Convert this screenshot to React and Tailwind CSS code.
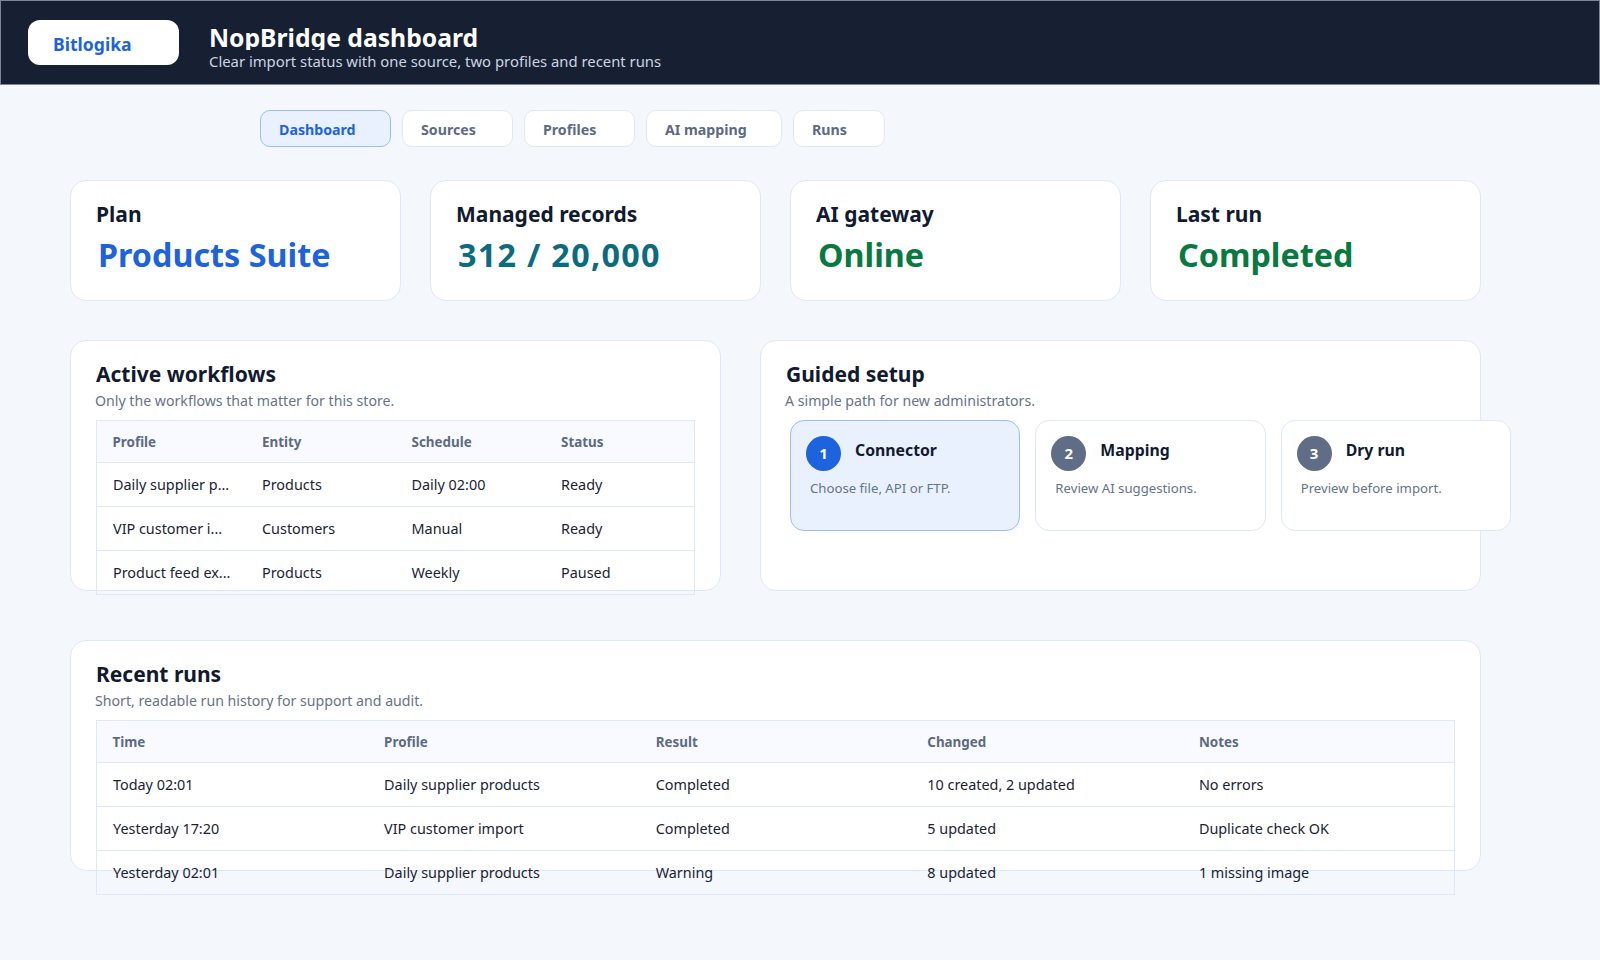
const workflows = [
  ['Daily supplier p...', 'Products', 'Daily 02:00', 'Ready'],
  ['VIP customer i...', 'Customers', 'Manual', 'Ready'],
  ['Product feed ex...', 'Products', 'Weekly', 'Paused'],
];

const runs = [
  ['Today 02:01', 'Daily supplier products', 'Completed', '10 created, 2 updated', 'No errors'],
  ['Yesterday 17:20', 'VIP customer import', 'Completed', '5 updated', 'Duplicate check OK'],
  ['Yesterday 02:01', 'Daily supplier products', 'Warning', '8 updated', '1 missing image'],
];

const stats = [
  { label: 'Plan', value: 'Products Suite', color: 'text-[#1d63dd]' },
  { label: 'Managed records', value: '312 / 20,000', color: 'text-[#0b6b80] tracking-[0.04em]' },
  { label: 'AI gateway', value: 'Online', color: 'text-[#08793f]' },
  { label: 'Last run', value: 'Completed', color: 'text-[#08793f]' },
];

const tabs = [
  { label: 'Dashboard', width: 'w-[131px]', active: true },
  { label: 'Sources', width: 'w-[111px]' },
  { label: 'Profiles', width: 'w-[111px]' },
  { label: 'AI mapping', width: 'w-[136px]' },
  { label: 'Runs', width: 'w-[91.5px]' },
];

const steps = [
  { n: 1, title: 'Connector', desc: 'Choose file, API or FTP.', active: true },
  { n: 2, title: 'Mapping', desc: 'Review AI suggestions.' },
  { n: 3, title: 'Dry run', desc: 'Preview before import.' },
];

const DataTable = ({ headers, rows }) => (
  <table className="w-full table-fixed border-collapse border border-[#dfe8f6] text-[14.4px] text-[#1a2335]">
    <thead>
      <tr className="h-[42px] bg-[#f8faff]">
        {headers.map((h) => (
          <th key={h} className="border-b border-[#dfe8f6] px-4 pt-[1px] text-left text-[13.4px] font-bold text-[#5d6a84] first:pl-[15.5px]">
            {h}
          </th>
        ))}
      </tr>
    </thead>
    <tbody>
      {rows.map((row) => (
        <tr key={row.join()} className="h-[44px] border-b border-[#dfe8f6] last:border-b-0">
          {row.map((cell, i) => (
            <td key={i} className="px-4 whitespace-nowrap">
              {cell}
            </td>
          ))}
        </tr>
      ))}
    </tbody>
  </table>
);

const Panel = ({ title, sub, className, children }) => (
  <section className={`rounded-2xl border border-[#dfe8f6] bg-white px-[25px] pt-[19px] ${className}`}>
    <h2 className="text-[21px] leading-[28px] font-bold text-[#111a2e]">{title}</h2>
    <p className="mt-[2px] mb-[8px] -ml-[1px] text-[14.15px] leading-[22px] text-[#667389]">{sub}</p>
    {children}
  </section>
);

export default function App() {
  return (
    <div className="min-h-screen bg-[#f4f7fc] font-['Noto_Sans',sans-serif] pb-[65px]">
      <header className="flex h-[85px] items-center gap-[30px] border border-[#7d8696] bg-[#172033] pl-[27px]">
        <div className="flex h-[45px] w-[151px] items-center rounded-xl bg-white pt-[3px] pl-[25px] text-[17.6px] font-bold text-[#1d63dd]">
          Bitlogika
        </div>
        <div className="pt-[10px]">
          <h1 className="overflow-hidden text-[24.7px] leading-[25px] font-bold text-white">NopBridge dashboard</h1>
          <p className="mt-[1px] text-[14.85px] leading-[20px] text-[#cbd5e1]">Clear import status with one source, two profiles and recent runs</p>
        </div>
      </header>

      <nav className="flex gap-[11px] pt-[25px] pl-[260px]">
        {tabs.map((t) => (
          <button
            key={t.label}
            className={`h-[37px] rounded-[10px] border pt-[2px] pl-[18px] text-left text-[14.2px] font-bold ${t.width} ${
              t.active ? 'border-[#9dbcf7] bg-[#e9f1ff] text-[#1d63dd]' : 'border-[#dfe8f6] bg-white text-[#5d6a84]'
            }`}
          >
            {t.label}
          </button>
        ))}
      </nav>

      <main className="w-[1411px] ml-[70px] pt-[33px]">
        <div className="grid grid-cols-4 gap-[29px]">
          {stats.map((s) => (
            <div key={s.label} className="h-[121px] rounded-2xl border border-[#dfe8f6] bg-white px-[25px] pt-[18px]">
              <div className="text-[21px] leading-[30px] font-bold text-[#111a2e]">{s.label}</div>
              <div className={`pt-[2px] pl-[2px] text-[32.3px] leading-[46px] font-bold ${s.color}`}>{s.value}</div>
            </div>
          ))}
        </div>

        <div className="mt-[39px] flex gap-[39px]">
          <Panel title="Active workflows" sub="Only the workflows that matter for this store." className="h-[251px] w-[651px] shrink-0">
            <DataTable headers={['Profile', 'Entity', 'Schedule', 'Status']} rows={workflows} />
          </Panel>

          <Panel title="Guided setup" sub="A simple path for new administrators." className="h-[251px] w-[721px] shrink-0">
            <div className="ml-[4px] flex w-[721px] gap-[15px]">
              {steps.map((s) => (
                <div
                  key={s.n}
                  className={`h-[111px] flex-1 rounded-[14px] border px-[15px] pt-[15px] ${
                    s.active ? 'border-[#9dbcf7] bg-[#e9f1ff]' : 'border-[#dfe8f6] bg-white'
                  }`}
                >
                  <div className="flex gap-[14px]">
                    <span className={`flex size-[35px] items-center justify-center rounded-full text-[15px] font-bold text-white ${s.active ? 'bg-[#1d63dd]' : 'bg-[#5f6d86]'}`}>
                      {s.n}
                    </span>
                    <span className="pt-[1px] text-[15.8px] leading-[26px] font-bold text-[#111a2e]">{s.title}</span>
                  </div>
                  <p className="mt-[7px] pl-[4px] text-[13.2px] leading-[20px] text-[#667389]">{s.desc}</p>
                </div>
              ))}
            </div>
          </Panel>
        </div>

        <Panel title="Recent runs" sub="Short, readable run history for support and audit." className="mt-[49px] h-[231px]">
          <DataTable headers={['Time', 'Profile', 'Result', 'Changed', 'Notes']} rows={runs} />
        </Panel>
      </main>
    </div>
  );
}
